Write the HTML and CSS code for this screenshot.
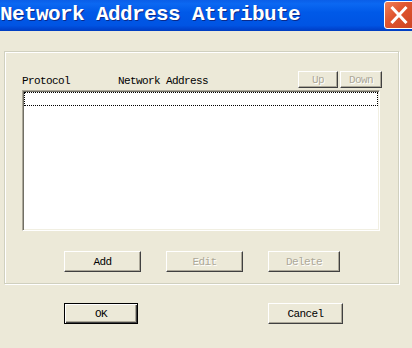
FILE: index.html
```html
<!DOCTYPE html>
<html lang="en">
<head>
  <meta charset="UTF-8">
  <title>Network Address Attribute</title>
  <link rel="stylesheet" href="styles.css">
</head>
<body>
  <div class="window">
    <div class="titlebar">
      <span class="title">Network Address Attribute</span>
      <button class="close" title="Close">
        <svg width="32" height="28" viewBox="0 0 32 28">
          <path d="M8.5 7 L21.5 21 M21.5 7 L8.5 21" stroke="#fff" stroke-width="3" stroke-linecap="square" fill="none"/>
        </svg>
      </button>
    </div>

    <div class="client">
      <div class="group">
        <div class="list-head">
          <span class="col-protocol">Protocol</span>
          <span class="col-address">Network Address</span>
          <div class="order-buttons">
            <button class="btn btn-up" disabled>Up</button>
            <button class="btn btn-down" disabled>Down</button>
          </div>
        </div>
        <div class="list">
          <div class="focus-row"></div>
        </div>
        <div class="row-buttons">
          <button class="btn btn-add">Add</button>
          <button class="btn btn-edit" disabled>Edit</button>
          <button class="btn btn-delete" disabled>Delete</button>
        </div>
      </div>

      <div class="dialog-buttons">
        <button class="btn btn-default btn-ok">OK</button>
        <button class="btn btn-cancel">Cancel</button>
      </div>
    </div>
  </div>
</body>
</html>
```

FILE: styles.css
```css
body { margin: 0; background: #ece9d8; font-family: "Liberation Mono", "DejaVu Sans Mono", monospace; font-size: 11px; color: #000; }
.window { width: 412px; height: 348px; overflow: hidden; background: #ece9d8; }

.titlebar { height: 31px; display: flex; align-items: flex-start; overflow: hidden;
  background: linear-gradient(#0a5ee8 0, #0b68f2 12%, #0059e8 40%, #0054e3 82%, #0046d2 92%, #003dbf 100%); }
.title { flex: 1; margin: 4px 0 0 0; font-size: 21px; font-weight: bold; letter-spacing: -0.6px; color: #fff;
  line-height: 22px; white-space: nowrap; text-shadow: 1px 1px #0a2a8a; }
.close { width: 32px; height: 28px; margin: 1px -4px 0 0; padding: 0; border: 1px solid #fff; border-radius: 3px;
  background: linear-gradient(135deg, #f0825c 0, #e0552f 40%, #cc4322 100%); display: block; }
.close svg { display: block; margin: -1px 0 0 -1px; }

.client { padding: 20px 0 0 4px; }

.group { border: 1px solid #d0d0bf; box-shadow: inset 1px 1px #fff, 1px 1px #fff;
  padding: 19px 17px 0 17px; box-sizing: border-box; width: 395px; height: 233px; }

.list-head { display: flex; align-items: flex-end; height: 17px; width: 360px; }
.col-protocol { width: 96px; letter-spacing: -0.6px; line-height: 12px; margin-bottom: 1px; }
.col-address { flex: 1; letter-spacing: -0.6px; line-height: 12px; margin-bottom: 1px; }
.order-buttons { display: flex; gap: 2px; }

.list { width: 358px; height: 141px; margin-top: 2px; background: #fff; box-sizing: border-box;
  border: 1px solid; border-color: #aca899 #fff #fff #aca899; box-shadow: inset 1px 1px #716f64, inset -1px -1px #f1efe2;
  padding: 1px; }
.focus-row { height: 12px; border: 1px dotted #000; }

.row-buttons { display: flex; gap: 25px; margin-top: 20px; padding-left: 42px; }

.btn { height: 21px; padding: 0; box-sizing: border-box; background: #ece9d8; font-family: inherit; font-size: 11px;
  letter-spacing: -0.6px; color: #000; border: 1px solid; border-color: #fff #404040 #404040 #fff;
  box-shadow: inset -1px -1px #aca899; }
.btn:disabled { color: #aca899; text-shadow: 1px 1px #fff; }
.btn-up { width: 40px; height: 17px; }
.btn-down { width: 42px; height: 17px; }
.btn-add, .btn-edit { width: 77px; }
.btn-delete { width: 72px; }

.dialog-buttons { display: flex; gap: 130px; margin-top: 19px; padding-left: 60px; }
.btn-default { border: 1px solid #000; box-shadow: inset 1px 1px #fff, inset -1px -1px #404040, inset -2px -2px #aca899; }
.btn-ok { width: 74px; }
.btn-cancel { width: 75px; }
```
